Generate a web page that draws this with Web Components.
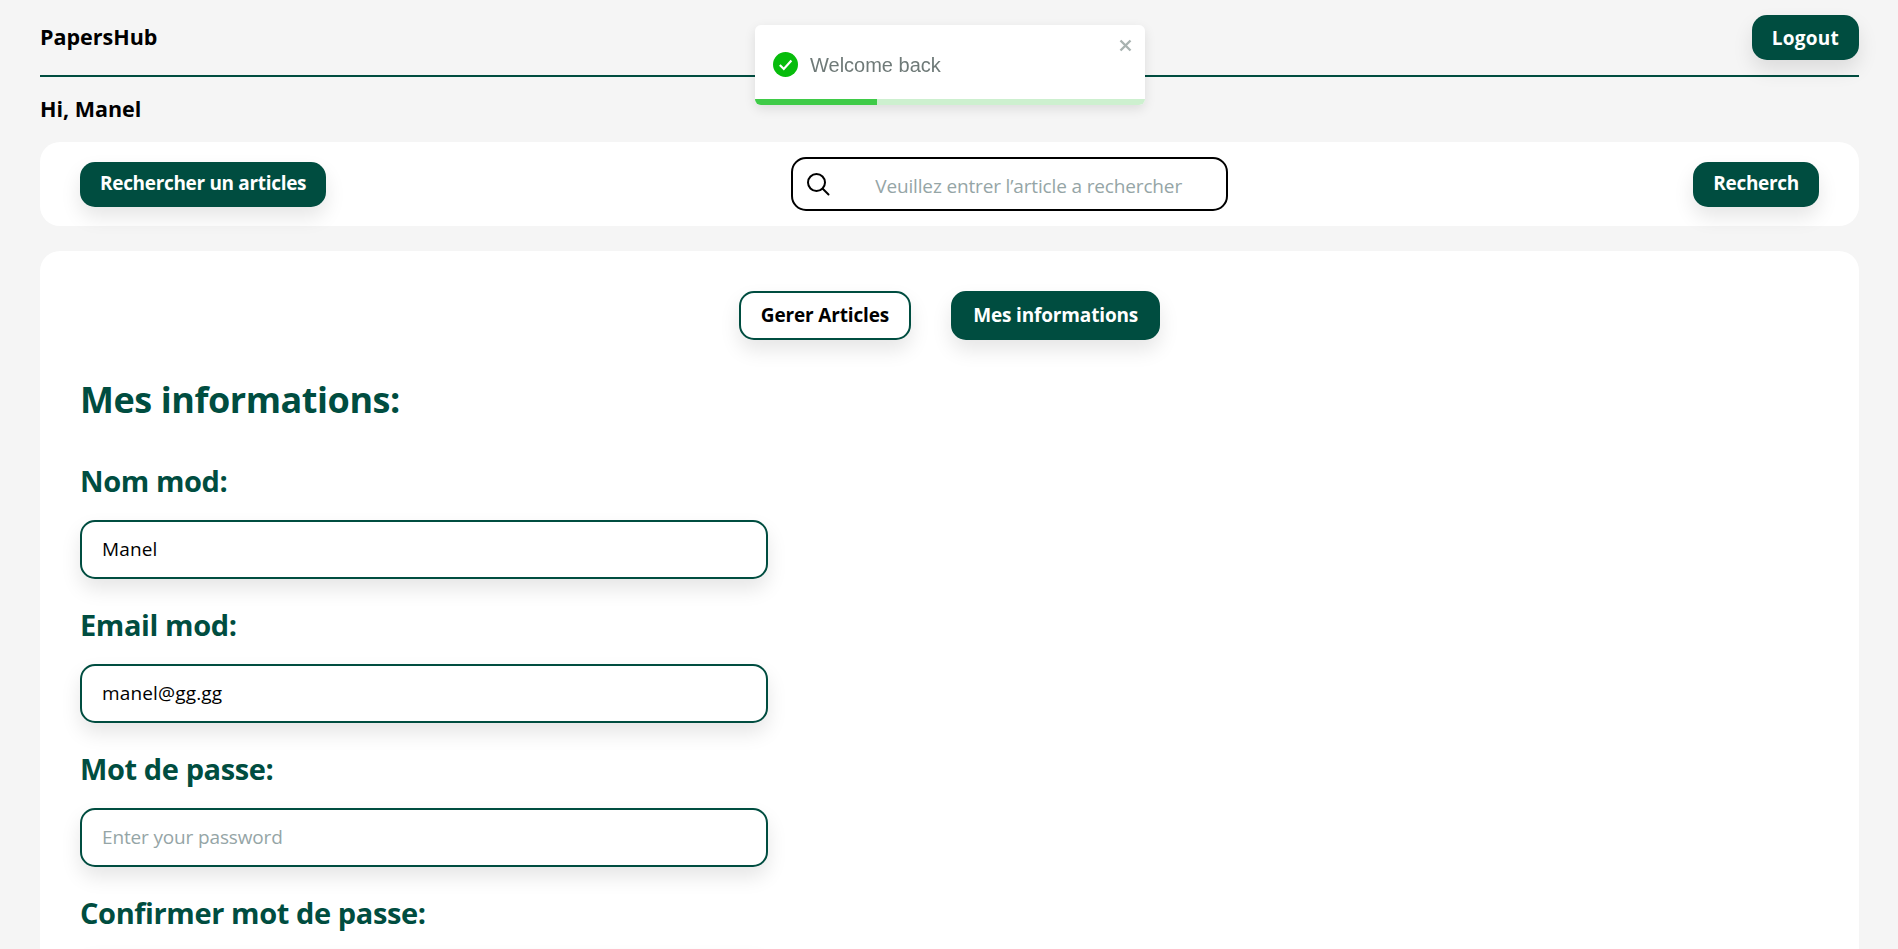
<!DOCTYPE html>
<html lang="fr">
<head>
<meta charset="utf-8">
<title>PapersHub</title>
<style>
  html, body { height: 100%; overflow: hidden; }
  body {
    margin: 0;
    padding: 0 39px 0 40px;
    box-sizing: border-box;
    background: #f5f5f5;
    color: #000;
    font-family: 'Open Sans', 'Noto Sans', sans-serif;
  }
</style>
</head>
<body>
<site-header>
  <span slot="brand">PapersHub</span>
  <app-button slot="action" low style="--track: .25px">Logout</app-button>
</site-header>
<greeting-line>Hi, Manel</greeting-line>
<search-panel></search-panel>
<main-card>
  <tab-bar slot="tabs">
    <app-button outline raised>Gerer Articles</app-button>
    <app-button raised>Mes informations</app-button>
  </tab-bar>
  <info-form></info-form>
</main-card>
<toast-alert>Welcome back</toast-alert>

<script>
const GREEN = '#004d40';

class AppButton extends HTMLElement {
  constructor() {
    super();
    this.attachShadow({ mode: 'open' }).innerHTML = `
      <style>
        :host { display: inline-block; }
        button {
          display: block;
          font: inherit;
          font-size: 19px;
          font-weight: 700;
          letter-spacing: var(--track, -.15px);
          line-height: 25px;
          padding: 9px 20px 11px;
          color: #fff;
          background: ${GREEN};
          border: 0;
          border-radius: 15px;
          box-shadow: 0 10px 20px rgba(0, 0, 0, .1);
          cursor: pointer;
          white-space: nowrap;
        }
        :host([low]) button { padding: 11px 20px 9px; }
        :host([raised]) button { padding: 10px 20px; border: 2px solid ${GREEN}; }
        :host([outline]) button { background: #fff; color: #000; }
      </style>
      <button><slot></slot></button>`;
  }
}

class SiteHeader extends HTMLElement {
  constructor() {
    super();
    this.attachShadow({ mode: 'open' }).innerHTML = `
      <style>
        :host {
          display: flex;
          justify-content: space-between;
          align-items: center;
          padding: 15px 0;
          border-bottom: 2px solid ${GREEN};
        }
        .brand { font-size: 21.5px; font-weight: 700; padding-bottom: 2px; }
      </style>
      <div class="brand"><slot name="brand"></slot></div>
      <slot name="action"></slot>`;
  }
}

class GreetingLine extends HTMLElement {
  constructor() {
    super();
    this.attachShadow({ mode: 'open' }).innerHTML = `
      <style>
        :host {
          display: block;
          font-size: 21.5px;
          font-weight: 700;
          line-height: 32px;
          padding: 16px 0 17px;
        }
      </style>
      <slot></slot>`;
  }
}

class SearchPanel extends HTMLElement {
  constructor() {
    super();
    this.attachShadow({ mode: 'open' }).innerHTML = `
      <style>
        :host {
          display: flex;
          justify-content: space-between;
          align-items: center;
          height: 84px;
          padding: 0 40px;
          box-sizing: border-box;
          background: #fff;
          border-radius: 20px;
        }
        .box {
          display: flex;
          align-items: center;
          width: 437px;
          height: 54px;
          box-sizing: border-box;
          padding: 0 0 0 13px;
          border: 2px solid #000;
          border-radius: 15px;
        }
        svg { flex: none; width: 24px; height: 24px; }
        input {
          flex: 1;
          min-width: 0;
          margin-left: 45px;
          border: 0;
          outline: 0;
          padding: 3px 0 0;
          font: inherit;
          font-size: 19px;
          background: transparent;
        }
        input::placeholder { color: #95a5a6; opacity: 1; letter-spacing: -.15px; }
      </style>
      <app-button style="--track: -.32px">Rechercher un articles</app-button>
      <div class="box">
        <svg viewBox="0 0 24 24" fill="none" stroke="#000" stroke-width="2" stroke-linecap="round">
          <circle cx="10.5" cy="10.5" r="8.5"/>
          <path d="M17 17l5.5 5.5"/>
        </svg>
        <input type="text" placeholder="Veuillez entrer l’article a rechercher">
      </div>
      <app-button style="--track: -.3px">Recherch</app-button>`;
  }
}

class MainCard extends HTMLElement {
  constructor() {
    super();
    this.attachShadow({ mode: 'open' }).innerHTML = `
      <style>
        :host {
          display: block;
          margin-top: 25px;
          padding: 40px;
          background: #fff;
          border-radius: 20px;
        }
      </style>
      <slot name="tabs"></slot>
      <slot></slot>`;
  }
}

class TabBar extends HTMLElement {
  constructor() {
    super();
    this.attachShadow({ mode: 'open' }).innerHTML = `
      <style>
        :host { display: flex; justify-content: center; gap: 40px; }
      </style>
      <slot></slot>`;
  }
}

class FormField extends HTMLElement {
  constructor() {
    super();
    const type = this.getAttribute('type') || 'text';
    const value = this.getAttribute('value') || '';
    const placeholder = this.getAttribute('placeholder') || '';
    this.attachShadow({ mode: 'open' }).innerHTML = `
      <style>
        :host { display: block; height: 144px; }
        label {
          display: block;
          height: 38px;
          margin-bottom: 20px;
          font-size: 29px;
          font-weight: 700;
          letter-spacing: -.4px;
          line-height: 38px;
          color: ${GREEN};
        }
        input {
          display: block;
          width: 688px;
          height: 59px;
          box-sizing: border-box;
          padding: 0 20px 2px;
          font: inherit;
          font-size: 19px;
          letter-spacing: .15px;
          color: #000;
          background: #fff;
          border: 2px solid ${GREEN};
          border-radius: 15px;
          outline: 0;
          box-shadow: 0 10px 20px rgba(0, 0, 0, .1);
        }
        input::placeholder { color: #95a5a6; opacity: 1; letter-spacing: -.15px; }
      </style>
      <label><slot></slot></label>
      <input type="${type}" value="${value}" placeholder="${placeholder}">`;
  }
}

class InfoForm extends HTMLElement {
  constructor() {
    super();
    this.attachShadow({ mode: 'open' }).innerHTML = `
      <style>
        :host { display: block; }
        h1 {
          margin: 35px 0 38px;
          font-size: 36px;
          font-weight: 700;
          letter-spacing: -.45px;
          line-height: 49px;
          color: ${GREEN};
        }
      </style>
      <h1>Mes informations:</h1>
      <form-field value="Manel">Nom mod:</form-field>
      <form-field value="manel@gg.gg">Email mod:</form-field>
      <form-field type="password" placeholder="Enter your password">Mot de passe:</form-field>
      <form-field type="password" placeholder="Confirm your password">Confirmer mot de passe:</form-field>`;
  }
}

class ToastAlert extends HTMLElement {
  constructor() {
    super();
    this.attachShadow({ mode: 'open' }).innerHTML = `
      <style>
        :host {
          position: fixed;
          top: 25px;
          left: 755px;
          width: 390px;
          height: 80px;
          overflow: hidden;
          display: flex;
          align-items: center;
          box-sizing: border-box;
          padding: 0 18px 0 18px;
          background: #fff;
          border-radius: 6px;
          box-shadow: 0 4px 12px rgba(0, 0, 0, .1);
          font-family: 'Liberation Sans', Arial, sans-serif;
          font-size: 20px;
          color: #6f7a78;
        }
        .icon { flex: none; width: 25px; height: 25px; margin-right: 12px; margin-top: -1px; }
        .close { position: absolute; top: 14px; right: 13px; width: 13px; height: 13px; }
        .bar { position: absolute; left: 0; right: 0; bottom: 0; height: 6px; background: #cdf0cf; }
        .bar i { display: block; width: 122px; height: 100%; background: #3fcb48; }
      </style>
      <svg class="icon" viewBox="0 0 25 25">
        <circle cx="12.5" cy="12.5" r="12.5" fill="#07bc0c"/>
        <path d="M6.8 13l4 4 7.6-8.4" fill="none" stroke="#fff" stroke-width="2.2"/>
      </svg>
      <span class="text"><slot></slot></span>
      <svg class="close" viewBox="0 0 13 13">
        <path d="M1.5 1.5l10 10M11.5 1.5l-10 10" stroke="#a9b3b1" stroke-width="2.4"/>
      </svg>
      <div class="bar"><i></i></div>`;
  }
}

customElements.define('app-button', AppButton);
customElements.define('site-header', SiteHeader);
customElements.define('greeting-line', GreetingLine);
customElements.define('search-panel', SearchPanel);
customElements.define('main-card', MainCard);
customElements.define('tab-bar', TabBar);
customElements.define('form-field', FormField);
customElements.define('info-form', InfoForm);
customElements.define('toast-alert', ToastAlert);
</script>
</body>
</html>
